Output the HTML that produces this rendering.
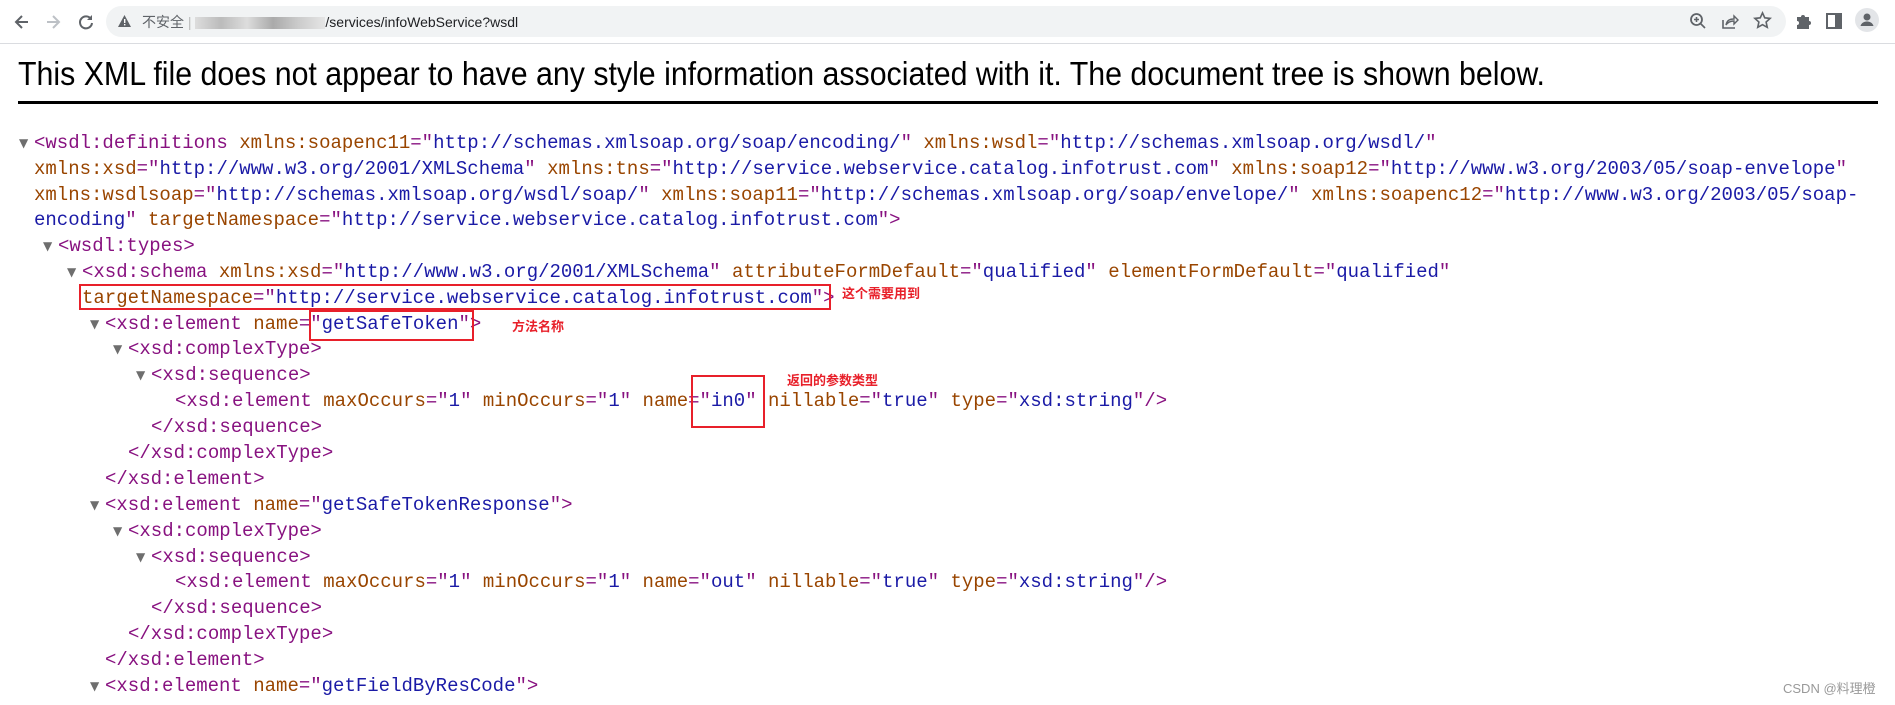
<!DOCTYPE html>
<html><head><meta charset="utf-8"><style>
*{margin:0;padding:0;box-sizing:border-box}
body{width:1895px;height:705px;background:#fff;position:relative;overflow:hidden;font-family:"Liberation Sans","Noto Sans CJK SC",sans-serif}
.bar{position:absolute;left:0;top:0;width:1895px;height:44px;background:#fff;border-bottom:1px solid #dadce0}
.omni{position:absolute;left:106px;top:6px;width:1680px;height:31px;border-radius:16px;background:#f1f3f4}
.url{position:absolute;left:142px;top:12px;font-size:14px;color:#202124;white-space:nowrap}
.ic{position:absolute}
h1{position:absolute;left:18px;top:55px;font-weight:normal;font-size:33px;color:#000;white-space:nowrap;transform-origin:0 0}
.rule{position:absolute;left:18px;top:101px;width:1860px;height:3px;background:#000}
.l{position:absolute;font-family:"Liberation Mono",monospace;font-size:19px;line-height:26px;white-space:pre;color:#000}
.t{color:#881280}.a{color:#994500}.v{color:#1a1aa6}
.ar{position:absolute;margin-left:-15px;font-size:12px;color:#6e6e6e;font-family:"DejaVu Sans",sans-serif}
.box{position:absolute;border:2px solid #e8202a}
.note{position:absolute;color:#e8202a;font-weight:bold;font-size:13px;font-family:"Liberation Sans","Noto Sans CJK SC",sans-serif}
</style></head><body>
<div class="bar">
<svg class="ic" style="left:12px;top:12px" width="20" height="20" viewBox="0 0 20 20"><path d="M16 10H5M10 4L4 10l6 6" stroke="#5f6368" stroke-width="2" fill="none"/></svg>
<svg class="ic" style="left:43px;top:12px" width="20" height="20" viewBox="0 0 20 20"><path d="M4 10h11M10 4l6 6-6 6" stroke="#bdc1c6" stroke-width="2" fill="none"/></svg>
<svg class="ic" style="left:76px;top:12px" width="20" height="20" viewBox="0 0 20 20"><path d="M15 7a6 6 0 1 0 1 4" stroke="#5f6368" stroke-width="2" fill="none"/><path d="M16 3v5h-5z" fill="#5f6368"/></svg>
<div class="omni"></div>
<svg class="ic" style="left:117px;top:14px" width="15" height="14" viewBox="0 0 15 14"><path d="M7.5 1L14 13H1z" fill="#5f6368"/><rect x="7" y="5" width="1.4" height="4" fill="#fff"/><rect x="7" y="10" width="1.4" height="1.4" fill="#fff"/></svg>
<div class="url"><span style="color:#5f6368">不安全</span> <span style="color:#bbb">|</span> <span style="display:inline-block;width:130px;height:12px;background:linear-gradient(90deg,#ddd,#bbb,#ddd,#aaa,#ccc,#e5e5e5);vertical-align:middle"></span>/services/infoWebService?wsdl</div>
<svg class="ic" style="left:1689px;top:12px" width="18" height="18" viewBox="0 0 18 18"><circle cx="7.5" cy="7.5" r="5.5" stroke="#5f6368" stroke-width="1.8" fill="none"/><path d="M11.5 11.5l4.5 4.5M7.5 5v5M5 7.5h5" stroke="#5f6368" stroke-width="1.6"/></svg>
<svg class="ic" style="left:1721px;top:12px" width="18" height="18" viewBox="0 0 18 18"><path d="M2 8v8h12" stroke="#5f6368" stroke-width="1.6" fill="none"/><path d="M5 13c1-5 4-6 8-6V4l4 4-4 4V9c-3 0-6 1-8 4z" stroke="#5f6368" stroke-width="1.4" fill="none"/></svg>
<svg class="ic" style="left:1753px;top:11px" width="19" height="19" viewBox="0 0 20 20"><path d="M10 2l2.4 5.2 5.6.6-4.2 3.8 1.2 5.6L10 14.4 5 17.2l1.2-5.6L2 7.8l5.6-.6z" stroke="#5f6368" stroke-width="1.7" fill="none"/></svg>
<svg class="ic" style="left:1794px;top:12px" width="18" height="18" viewBox="0 0 18 18"><path d="M3 5h4a2 2 0 1 1 4 0h4v4a2 2 0 1 1 0 4v4H3v-4a2 2 0 1 0 0-4z" fill="#5f6368"/></svg>
<svg class="ic" style="left:1825px;top:12px" width="18" height="18" viewBox="0 0 18 18"><rect x="2" y="2" width="14" height="14" stroke="#5f6368" stroke-width="2" fill="none"/><rect x="10" y="2" width="6" height="14" fill="#5f6368"/></svg>
<svg class="ic" style="left:1855px;top:8px" width="24" height="24" viewBox="0 0 24 24"><circle cx="12" cy="12" r="12" fill="#e3e5e8"/><circle cx="12" cy="9" r="3.5" fill="#5f6368"/><path d="M5.5 18c1-3.5 4-4.5 6.5-4.5s5.5 1 6.5 4.5z" fill="#5f6368"/></svg>
</div>
<h1 id="h">This XML file does not appear to have any style information associated with it. The document tree is shown below.</h1>
<div class="rule"></div>

<div class="l" style="left:34px;top:130px"><span class="ar">▼</span><span class="t">&lt;wsdl:definitions</span> <span class="a">xmlns:soapenc11</span><span class="t">="</span><span class="v">http://schemas.xmlsoap.org/soap/encoding/</span><span class="t">"</span> <span class="a">xmlns:wsdl</span><span class="t">="</span><span class="v">http://schemas.xmlsoap.org/wsdl/</span><span class="t">"</span></div>
<div class="l" style="left:34px;top:156px"><span class="a">xmlns:xsd</span><span class="t">="</span><span class="v">http://www.w3.org/2001/XMLSchema</span><span class="t">"</span> <span class="a">xmlns:tns</span><span class="t">="</span><span class="v">http://service.webservice.catalog.infotrust.com</span><span class="t">"</span> <span class="a">xmlns:soap12</span><span class="t">="</span><span class="v">http://www.w3.org/2003/05/soap-envelope</span><span class="t">"</span></div>
<div class="l" style="left:34px;top:182px"><span class="a">xmlns:wsdlsoap</span><span class="t">="</span><span class="v">http://schemas.xmlsoap.org/wsdl/soap/</span><span class="t">"</span> <span class="a">xmlns:soap11</span><span class="t">="</span><span class="v">http://schemas.xmlsoap.org/soap/envelope/</span><span class="t">"</span> <span class="a">xmlns:soapenc12</span><span class="t">="</span><span class="v">http://www.w3.org/2003/05/soap-</span></div>
<div class="l" style="left:34px;top:207px"><span class="v">encoding</span><span class="t">"</span> <span class="a">targetNamespace</span><span class="t">="</span><span class="v">http://service.webservice.catalog.infotrust.com</span><span class="t">"&gt;</span></div>
<div class="l" style="left:58px;top:233px"><span class="ar">▼</span><span class="t">&lt;wsdl:types&gt;</span></div>
<div class="l" style="left:82px;top:259px"><span class="ar">▼</span><span class="t">&lt;xsd:schema</span> <span class="a">xmlns:xsd</span><span class="t">="</span><span class="v">http://www.w3.org/2001/XMLSchema</span><span class="t">"</span> <span class="a">attributeFormDefault</span><span class="t">="</span><span class="v">qualified</span><span class="t">"</span> <span class="a">elementFormDefault</span><span class="t">="</span><span class="v">qualified</span><span class="t">"</span></div>
<div class="l" style="left:82px;top:285px"><span class="a">targetNamespace</span><span class="t">="</span><span class="v">http://service.webservice.catalog.infotrust.com</span><span class="t">"&gt;</span></div>
<div class="l" style="left:105px;top:311px"><span class="ar">▼</span><span class="t">&lt;xsd:element</span> <span class="a">name</span><span class="t">="</span><span class="v">getSafeToken</span><span class="t">"&gt;</span></div>
<div class="l" style="left:128px;top:336px"><span class="ar">▼</span><span class="t">&lt;xsd:complexType&gt;</span></div>
<div class="l" style="left:151px;top:362px"><span class="ar">▼</span><span class="t">&lt;xsd:sequence&gt;</span></div>
<div class="l" style="left:175px;top:388px"><span class="t">&lt;xsd:element</span> <span class="a">maxOccurs</span><span class="t">="</span><span class="v">1</span><span class="t">"</span> <span class="a">minOccurs</span><span class="t">="</span><span class="v">1</span><span class="t">"</span> <span class="a">name</span><span class="t">="</span><span class="v">in0</span><span class="t">"</span> <span class="a">nillable</span><span class="t">="</span><span class="v">true</span><span class="t">"</span> <span class="a">type</span><span class="t">="</span><span class="v">xsd:string</span><span class="t">"/&gt;</span></div>
<div class="l" style="left:151px;top:414px"><span class="t">&lt;/xsd:sequence&gt;</span></div>
<div class="l" style="left:128px;top:440px"><span class="t">&lt;/xsd:complexType&gt;</span></div>
<div class="l" style="left:105px;top:466px"><span class="t">&lt;/xsd:element&gt;</span></div>
<div class="l" style="left:105px;top:492px"><span class="ar">▼</span><span class="t">&lt;xsd:element</span> <span class="a">name</span><span class="t">="</span><span class="v">getSafeTokenResponse</span><span class="t">"&gt;</span></div>
<div class="l" style="left:128px;top:518px"><span class="ar">▼</span><span class="t">&lt;xsd:complexType&gt;</span></div>
<div class="l" style="left:151px;top:544px"><span class="ar">▼</span><span class="t">&lt;xsd:sequence&gt;</span></div>
<div class="l" style="left:175px;top:569px"><span class="t">&lt;xsd:element</span> <span class="a">maxOccurs</span><span class="t">="</span><span class="v">1</span><span class="t">"</span> <span class="a">minOccurs</span><span class="t">="</span><span class="v">1</span><span class="t">"</span> <span class="a">name</span><span class="t">="</span><span class="v">out</span><span class="t">"</span> <span class="a">nillable</span><span class="t">="</span><span class="v">true</span><span class="t">"</span> <span class="a">type</span><span class="t">="</span><span class="v">xsd:string</span><span class="t">"/&gt;</span></div>
<div class="l" style="left:151px;top:595px"><span class="t">&lt;/xsd:sequence&gt;</span></div>
<div class="l" style="left:128px;top:621px"><span class="t">&lt;/xsd:complexType&gt;</span></div>
<div class="l" style="left:105px;top:647px"><span class="t">&lt;/xsd:element&gt;</span></div>
<div class="l" style="left:105px;top:673px"><span class="ar">▼</span><span class="t">&lt;xsd:element</span> <span class="a">name</span><span class="t">="</span><span class="v">getFieldByResCode</span><span class="t">"&gt;</span></div>

<div class="box" style="left:79px;top:284px;width:752px;height:26px"></div>
<div class="box" style="left:309px;top:310px;width:165px;height:31px"></div>
<div class="box" style="left:691px;top:375px;width:74px;height:53px"></div>
<div class="note" style="left:842px;top:283px">这个需要用到</div>
<div class="note" style="left:512px;top:316px">方法名称</div>
<div class="note" style="left:787px;top:370px">返回的参数类型</div>
<div style="position:absolute;left:1783px;top:678px;font-size:13px;color:#999;font-family:'Liberation Sans','Noto Sans CJK SC',sans-serif">CSDN @料理橙</div>
<script>
var h=document.getElementById('h');var w=h.getBoundingClientRect().width;h.style.transform='scaleX('+(1527/w)+')';
</script>
</body></html>
